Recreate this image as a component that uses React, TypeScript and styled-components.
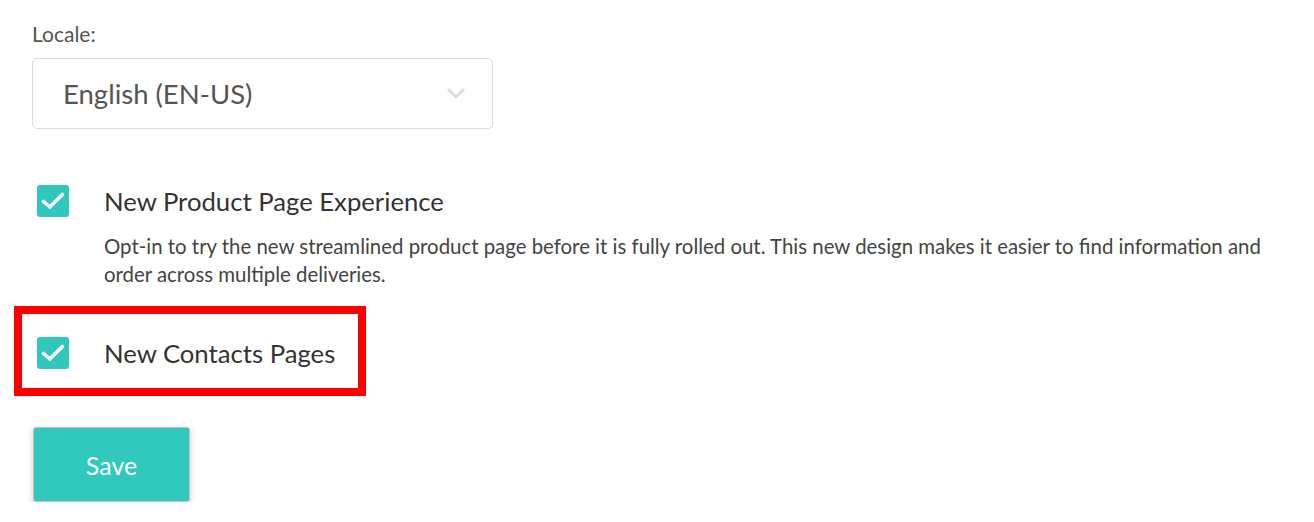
import React from "react";
import styled, { createGlobalStyle } from "styled-components";

const Global = createGlobalStyle`
  html, body { margin: 0; padding: 0; background: #fff; }
  body { font-family: Lato, "Open Sans", sans-serif; -webkit-font-smoothing: antialiased; }
`;

const Page = styled.div`
  padding: 22px 32px 0 32px;
  display: flex;
  flex-direction: column;
  align-items: flex-start;
`;

const Label = styled.div`
  font-size: 21px;
  line-height: 24px;
  color: #555;
`;

const Select = styled.div`
  margin-top: 12px;
  box-sizing: border-box;
  width: 461px;
  height: 71px;
  border: 1px solid #dcdcdc;
  border-radius: 5px;
  padding: 0 26px 0 30px;
  display: flex;
  align-items: center;
  justify-content: space-between;
  font-size: 27.5px;
  color: #555;
`;

const Option = styled.div<{ $top: number }>`
  margin-top: ${(p) => p.$top}px;
  margin-left: 5px;
  display: flex;
  gap: 35px;
  align-items: flex-start;
  position: relative;
`;

const Highlight = styled.div`
  position: absolute;
  left: -23px;
  top: -31px;
  width: 352px;
  height: 90px;
  box-sizing: border-box;
  border: 8px solid #ff0000;
  pointer-events: none;
`;

const Box = styled.div`
  width: 32px;
  height: 32px;
  flex: none;
  border-radius: 3px;
  background: #30c8bd;
  display: flex;
  align-items: center;
  justify-content: center;
`;

const Body = styled.div`
  display: flex;
  flex-direction: column;
`;

const Title = styled.div`
  font-size: 25.7px;
  line-height: 32px;
  color: #333;
`;

const Desc = styled.div`
  margin-top: 15px;
  font-size: 20.4px;
  line-height: 28px;
  color: #444;
`;

const SaveButton = styled.button`
  margin-top: 58px;
  margin-left: 1px;
  width: 157px;
  height: 75px;
  box-sizing: border-box;
  border: 1px solid #c4c4c4;
  border-radius: 3px;
  background: #31c8be;
  color: #fff;
  font-family: Lato, sans-serif;
  font-size: 25px;
  box-shadow: 0 2px 6px rgba(0, 0, 0, 0.22);
`;

const Check = () => (
  <svg width="32" height="32" viewBox="0 0 32 32">
    <path d="M6.5 16.5 L12.8 22 L25.5 9.5" fill="none" stroke="#fff" strokeWidth="3.6" strokeLinecap="round" strokeLinejoin="round" />
  </svg>
);

const Chevron = () => (
  <svg width="20" height="13" viewBox="0 0 20 13">
    <path d="M2 2 L10 10 L18 2" fill="none" stroke="#dcdcdc" strokeWidth="3" />
  </svg>
);

export default function App() {
  return (
    <>
      <Global />
      <Page>
        <Label>Locale:</Label>
        <Select>
          <span>English (EN-US)</span>
          <Chevron />
        </Select>
        <Option $top={56}>
          <Box><Check /></Box>
          <Body>
            <Title>New Product Page Experience</Title>
            <Desc>
              Opt-in to try the new streamlined product page before it is fully rolled out. This new design makes it easier to find information and order across multiple deliveries.
            </Desc>
          </Body>
        </Option>
        <Option $top={49}>
          <Highlight />
          <Box><Check /></Box>
          <Body>
            <Title>New Contacts Pages</Title>
          </Body>
        </Option>
        <SaveButton>Save</SaveButton>
      </Page>
    </>
  );
}
